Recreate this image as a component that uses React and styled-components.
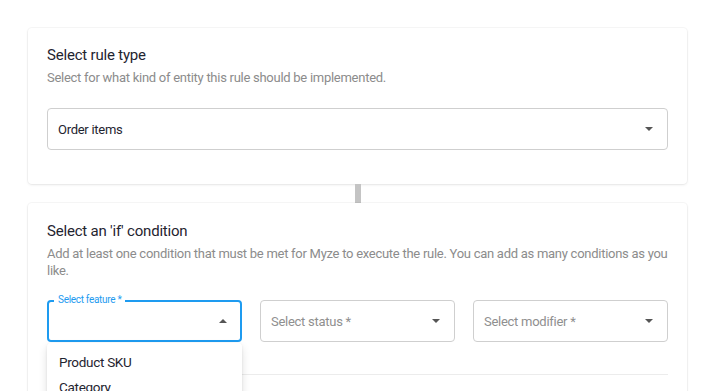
import React from "react";
import styled, { createGlobalStyle } from "styled-components";

const Global = createGlobalStyle`
  html, body { margin: 0; padding: 0; background: #ffffff; }
  body { font-family: Roboto, "Noto Sans", Arial, sans-serif; overflow: hidden; }
  * { box-sizing: border-box; }
`;

const Page = styled.div`
  padding: 28px 0 0 28px;
  width: 720px;
  height: 391px;
  overflow: hidden;
`;

const Column = styled.div`
  width: 659px;
  display: flex;
  flex-direction: column;
  align-items: center;
`;

const Card = styled.section`
  width: 100%;
  background: #fff;
  border-radius: 4px;
  box-shadow: 0 0 0 1px rgba(0,0,0,0.03), 0 1px 3px rgba(0,0,0,0.08);
  padding: ${p => p.$pad};
`;

const Title = styled.h2`
  margin: 0;
  font-size: 15px;
  font-weight: 400;
  line-height: 20px;
  letter-spacing: -0.2px;
  color: #1f2430;
`;

const Desc = styled.p`
  margin: 4px 0 0;
  font-size: 13px;
  line-height: 17px;
  letter-spacing: -0.27px;
  color: #8c8c8c;
`;

const Connector = styled.div`
  width: 6px;
  height: 19px;
  background: #c4c4c4;
`;

const Row = styled.div`
  display: grid;
  grid-template-columns: repeat(3, 1fr);
  gap: 18px;
  margin-top: ${p => p.$mt};
`;

const Field = styled.div`
  position: relative;
  margin-top: ${p => p.$mt || "0"};
`;

const Box = styled.div`
  height: 42px;
  border: ${p => (p.$focused ? "2px solid #1e9bf0" : "1px solid #cfcfcf")};
  border-radius: 4px;
  display: flex;
  align-items: center;
  padding: ${p => (p.$focused ? "0 13px 0 9px" : "0 14px 0 10px")};
  font-size: 13px;
  letter-spacing: -0.27px;
  color: ${p => (p.$placeholder ? "#8f8f8f" : "#1f2430")};
`;

const Value = styled.span`
  flex: 1;
  white-space: nowrap;
`;

const Caret = styled.span`
  width: 0;
  height: 0;
  border-left: 4.5px solid transparent;
  border-right: 4.5px solid transparent;
  ${p => (p.$up ? "border-bottom: 4.5px solid #555;" : "border-top: 4.5px solid #555;")}
`;

const FloatLabel = styled.label`
  position: absolute;
  top: -7px;
  left: 7px;
  padding: 0 4px;
  background: #fff;
  font-size: 10px;
  line-height: 13px;
  letter-spacing: -0.3px;
  color: #1e9bf0;
`;

const Menu = styled.ul`
  position: absolute;
  top: 43px;
  left: 0;
  width: 100%;
  margin: 0;
  padding: 6px 0;
  list-style: none;
  background: #fff;
  border-radius: 4px;
  box-shadow: 0 4px 10px rgba(0,0,0,0.12), 0 1px 3px rgba(0,0,0,0.08);
  z-index: 2;
`;

const MenuItem = styled.li`
  padding: 0 12px;
  height: 25px;
  display: flex;
  align-items: center;
  font-size: 13.5px;
  letter-spacing: -0.3px;
  color: #1f2430;
`;

const Divider = styled.hr`
  margin: 32px 0 0;
  border: 0;
  border-top: 1px solid #ececec;
`;

function Select({ value, placeholder, focused, label, children }) {
  return (
    <Field>
      <Box $focused={focused} $placeholder={!value}>
        <Value>{value || placeholder}</Value>
        <Caret $up={focused} />
      </Box>
      {label && <FloatLabel>{label}</FloatLabel>}
      {children}
    </Field>
  );
}

export default function App() {
  return (
    <Page>
      <Global />
      <Column>
        <Card $pad="17px 19px 34px">
          <Title>Select rule type</Title>
          <Desc>Select for what kind of entity this rule should be implemented.</Desc>
          <Field $mt="22px">
            <Select value="Order items" />
          </Field>
        </Card>
        <Connector />
        <Card $pad="18px 19px 40px">
          <Title>Select an 'if' condition</Title>
          <Desc>
            Add at least one condition that must be met for Myze to execute the rule. You can add as many conditions as you like.
          </Desc>
          <Row $mt="21px">
            <Select focused label="Select feature *" value="">
              <Menu>
                <MenuItem>Product SKU</MenuItem>
                <MenuItem>Category</MenuItem>
                <MenuItem>Brand</MenuItem>
              </Menu>
            </Select>
            <Select placeholder="Select status *" />
            <Select placeholder="Select modifier *" />
          </Row>
          <Divider />
        </Card>
      </Column>
    </Page>
  );
}
